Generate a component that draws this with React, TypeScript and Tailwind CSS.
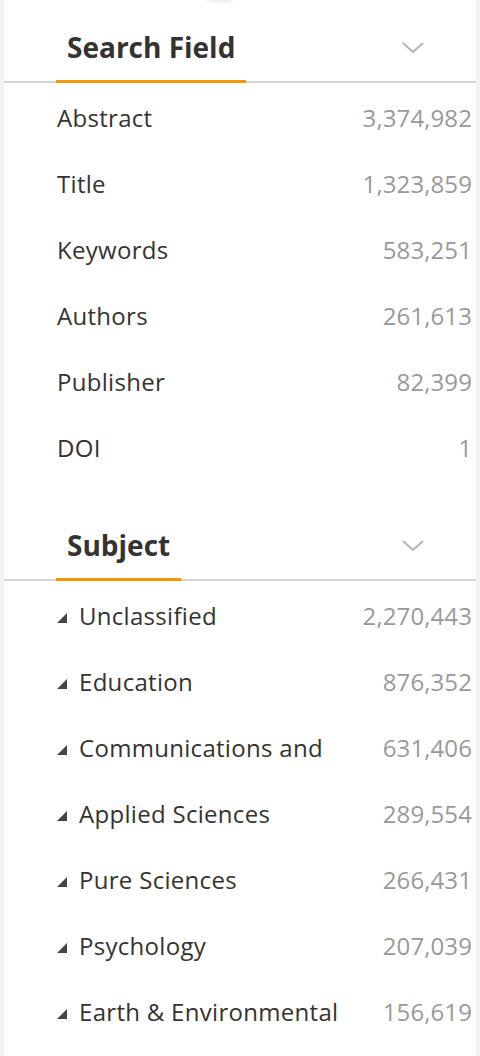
import React from "react";

const fieldRows: [string, string][] = [
  ["Abstract", "3,374,982"],
  ["Title", "1,323,859"],
  ["Keywords", "583,251"],
  ["Authors", "261,613"],
  ["Publisher", "82,399"],
  ["DOI", "1"],
];

const subjectRows: [string, string][] = [
  ["Unclassified", "2,270,443"],
  ["Education", "876,352"],
  ["Communications and", "631,406"],
  ["Applied Sciences", "289,554"],
  ["Pure Sciences", "266,431"],
  ["Psychology", "207,039"],
  ["Earth & Environmental", "156,619"],
];

function Chevron() {
  return (
    <svg width="22" height="12" viewBox="0 0 22 12" className="block">
      <polyline points="1,1 11,10 21,1" fill="none" stroke="#b4b4b4" strokeWidth="2" />
    </svg>
  );
}

function Header({ title }: { title: string }) {
  return (
    <div className="flex items-start border-b-2 border-[#d4d4d4]">
      <div className="ml-[52px] -mb-[2px] border-b-[3px] border-[#f39800] px-[11px] pt-[29px] pb-[15px]">
        <span className="block text-[28px] font-bold leading-[36px] text-[#333]">{title}</span>
      </div>
      <div className="ml-auto mr-[52px] pt-[42px]">
        <Chevron />
      </div>
    </div>
  );
}

function Row({ label, count, tri }: { label: string; count: string; tri?: boolean }) {
  return (
    <div className="flex h-[66px] items-center pl-[53px] pr-[4px]">
      {tri && (
        <svg width="10" height="10" viewBox="0 0 10 10" className="mr-[12px] mt-[3px] block shrink-0">
          <polygon points="10,0 10,10 0,10" fill="#444" />
        </svg>
      )}
      <span className="text-[24px] leading-[32px] tracking-[0.3px] text-[#333]">{label}</span>
      <span className="ml-auto text-[24px] leading-[32px] tracking-[0.1px] text-[#999]">{count}</span>
    </div>
  );
}

export default function App() {
  return (
    <div
      className="min-h-[1056px] overflow-hidden bg-[#f3f3f7] px-[4px]"
      style={{ fontFamily: "'Open Sans', 'Noto Sans', sans-serif" }}
    >
      <div className="min-h-[1056px] bg-white">
        <div className="flex justify-center">
          <div className="-mt-[17px] ml-[-40px] h-[20px] w-[34px] rounded-full bg-[#eef5ee]" />
        </div>
        <div className="-mt-[3px]">
          <Header title="Search Field" />
          <div className="mt-[2px]">
            {fieldRows.map(([l, c]) => (
              <Row key={l} label={l} count={c} />
            ))}
          </div>
        </div>
        <div className="mt-[17px]">
          <Header title="Subject" />
          <div className="mt-[2px]">
            {subjectRows.map(([l, c]) => (
              <Row key={l} label={l} count={c} tri />
            ))}
          </div>
        </div>
      </div>
    </div>
  );
}
